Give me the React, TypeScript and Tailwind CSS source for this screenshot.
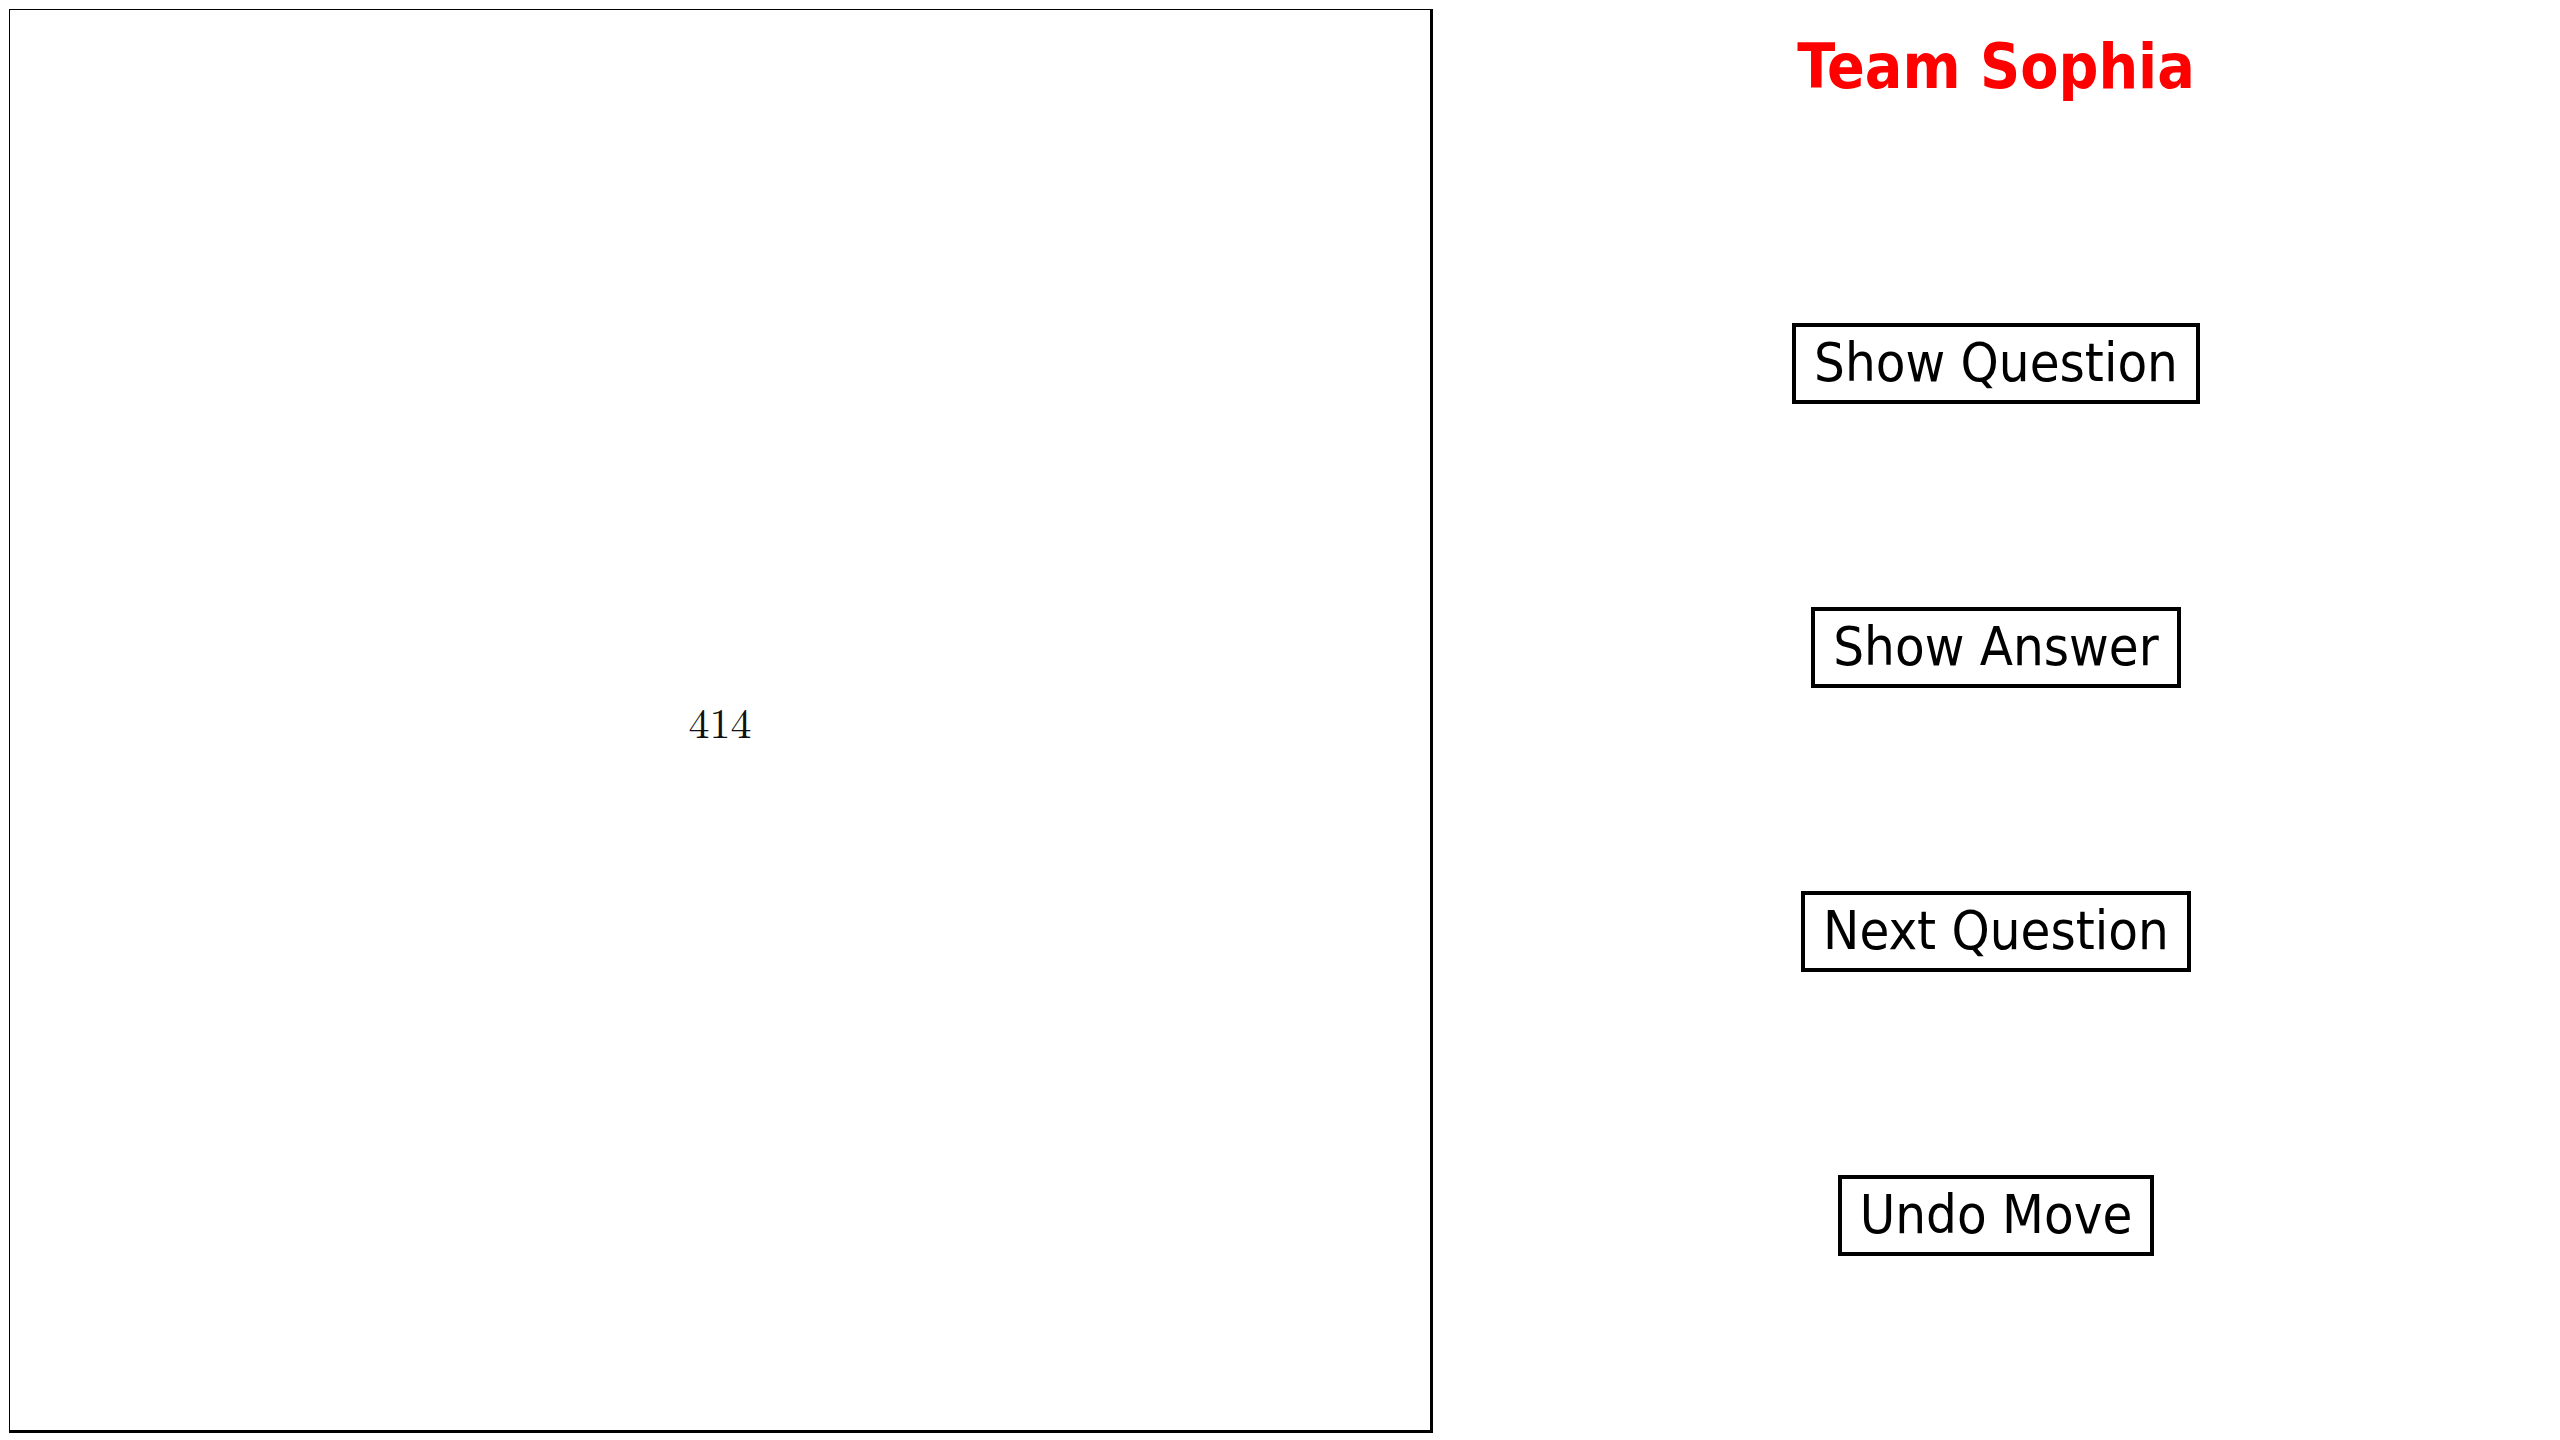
export default function App() {
  const buttons = ["Show Question", "Show Answer", "Next Question", "Undo Move"];
  return (
    <div className="flex h-screen w-screen bg-white">
      {/* Board */}
      <div className="m-[9px] flex h-[1424px] w-[1424px] shrink-0 items-center justify-center border-t border-l border-r-[3px] border-b-[3px] border-black">
        <span className="text-[42px] text-[#111]" style={{ fontFamily: '"Latin Modern Roman", "Liberation Serif", serif' }}>
          414
        </span>
      </div>

      {/* Controls */}
      <div className="flex flex-1 flex-col items-center pt-[31px] pr-[10px]" style={{ fontFamily: '"DejaVu Sans Condensed", "DejaVu Sans", sans-serif' }}>
        <h1 className="text-[62px] font-bold leading-[1.164] text-[#ff0000]">Team Sophia</h1>
        <div className="mt-[220px] flex flex-col items-center gap-[203px]">
          {buttons.map((label) => (
            <button
              key={label}
              className="border-4 border-black bg-white px-[18px] py-[5px] text-[54px] leading-[1.164] text-black"
            >
              {label}
            </button>
          ))}
        </div>
      </div>
    </div>
  );
}
